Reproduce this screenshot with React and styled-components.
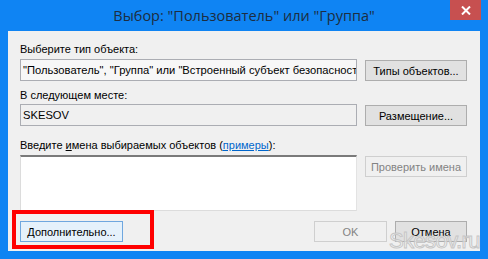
import React from 'react';
import styled, { createGlobalStyle } from 'styled-components';

const GlobalStyle = createGlobalStyle`
  html, body {
    margin: 0;
    padding: 0;
    background: #0f84f3;
  }
  body {
    font-family: "Liberation Sans", Arial, sans-serif;
  }
`;

const Window = styled.div`
  position: relative;
  width: 488px;
  height: 259px;
  box-sizing: border-box;
  background: #0f84f3;
  display: flex;
  flex-direction: column;
  padding: 0 8px 8px;
  overflow: hidden;
`;

const TitleBar = styled.div`
  position: relative;
  height: 31px;
  display: flex;
  align-items: center;
  justify-content: center;
`;

const Title = styled.div`
  font-family: "Open Sans", "Liberation Sans", sans-serif;
  font-size: 14.5px;
  color: #1d2d40;
  margin-top: -1px;
`;

const CloseButton = styled.div`
  position: absolute;
  right: -1px;
  top: 0;
  width: 31px;
  height: 20px;
  background: #c75050;
  display: flex;
  align-items: center;
  justify-content: center;
`;

const Panel = styled.div`
  flex: 1;
  background: #f0f0f0;
  padding: 12px 13px 9px 12px;
  display: flex;
  flex-direction: column;
`;

const Label = styled.div`
  font-size: 11px;
  line-height: 13px;
  color: #000;
  margin-bottom: ${(p) => p.$gap || 3}px;
  white-space: nowrap;
`;

const Row = styled.div`
  display: grid;
  grid-template-columns: 337px 102px;
  column-gap: 8px;
  align-items: ${(p) => p.$align || 'center'};
  margin-bottom: ${(p) => p.$gap || 0}px;
`;

const Field = styled.div`
  box-sizing: border-box;
  height: 22px;
  border: 1px solid #abadb3;
  background: ${(p) => (p.$light ? '#f7f7f7' : '#f0f0f0')};
  font-size: 11.2px;
  line-height: 20px;
  padding: 0 2px;
  white-space: nowrap;
  overflow: hidden;
  color: #000;
`;

const TextArea = styled.div`
  box-sizing: border-box;
  height: 56px;
  background: #fff;
  border: 1px solid #dcdcdc;
  border-top: 2px solid #7a7a7a;
  border-right-color: #e3e3e3;
`;

const Button = styled.div`
  box-sizing: border-box;
  height: 21px;
  width: ${(p) => p.$w || 102}px;
  display: flex;
  align-items: center;
  justify-content: center;
  font-size: 11px;
  white-space: nowrap;
  color: ${(p) => (p.$disabled ? '#838383' : '#000')};
  background: ${(p) => (p.$focus ? '#e5f1fb' : p.$disabled ? '#f0f0f0' : '#e1e1e1')};
  border: 1px solid
    ${(p) => (p.$focus ? '#6fa7df' : p.$disabled ? '#cfcfcf' : '#adadad')};
  margin-top: ${(p) => p.$top || 0}px;
`;

const Footer = styled.div`
  margin-top: 10px;
  display: flex;
  align-items: center;
`;

const Spacer = styled.div`
  flex: 1;
`;

const Gap = styled.div`
  width: 8px;
`;

const Link = styled.span`
  color: #0066cc;
  text-decoration: underline;
`;

const Access = styled.span`
  text-decoration: underline;
`;

const Highlight = styled.div`
  position: absolute;
  left: 12px;
  top: 210px;
  width: 142px;
  height: 39px;
  box-sizing: border-box;
  border: 4px solid #ff0000;
  pointer-events: none;
`;

const Watermark = styled.div`
  position: absolute;
  left: 389px;
  top: 228px;
  font-family: "Liberation Sans", Arial, sans-serif;
  font-size: 22px;
  letter-spacing: -0.6px;
  color: rgba(255, 255, 255, 0.55);
  -webkit-text-stroke: 1px #c6c6c6;
  pointer-events: none;
`;

export default function App() {
  return (
    <>
      <GlobalStyle />
      <Window>
        <TitleBar>
          <Title>Выбор: "Пользователь" или "Группа"</Title>
          <CloseButton>
            <svg width="10" height="9" viewBox="0 0 10 9">
              <path d="M1 0.5 L9 8.5 M9 0.5 L1 8.5" stroke="#fff" strokeWidth="2" />
            </svg>
          </CloseButton>
        </TitleBar>
        <Panel>
          <Label>Выберите тип объекта:</Label>
          <Row $gap={8}>
            <Field $light>"Пользователь", "Группа" или "Встроенный субъект безопасности"</Field>
            <Button $top={1}>Типы объектов...</Button>
          </Row>
          <Label $gap={2}>В следующем месте:</Label>
          <Row $gap={13}>
            <Field>SKESOV</Field>
            <Button $top={1}>Размещение...</Button>
          </Row>
          <Label>
            Введите <Access>и</Access>мена выбираемых объектов (<Link>примеры</Link>):
          </Label>
          <Row $align="start">
            <TextArea />
            <Button $disabled $top={1}>Проверить имена</Button>
          </Row>
          <Footer>
            <Button $focus $w={103}>Дополнительно...</Button>
            <Spacer />
            <Button $disabled $w={73}>OK</Button>
            <Gap />
            <Button $w={72}>Отмена</Button>
          </Footer>
        </Panel>
        <Highlight />
        <Watermark>Skesov.ru</Watermark>
      </Window>
    </>
  );
}
